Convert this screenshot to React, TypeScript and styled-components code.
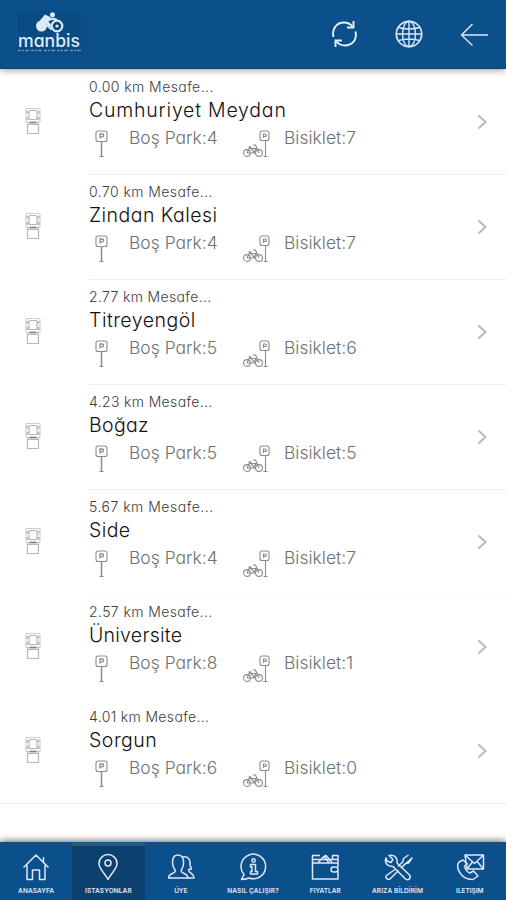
import React from "react";
import styled, { createGlobalStyle } from "styled-components";

const GlobalStyle = createGlobalStyle`
  * { box-sizing: border-box; }
  body { margin: 0; background: #fff; font-family: Inter, "Open Sans", sans-serif; font-feature-settings: "cv11" 1; }
`;

const Screen = styled.div`
  display: flex;
  flex-direction: column;
  width: 506px;
  height: 900px;
  overflow: hidden;
  background: #fff;
`;

const Header = styled.header`
  display: flex;
  align-items: center;
  flex: none;
  height: 69px;
  padding: 0 17px 0 16px;
  background: #0c508b;
  border-bottom: 1px solid #0a4579;
  box-shadow: 0 1px 7px rgba(0, 0, 0, 0.42);
  z-index: 1;
`;

const Brand = styled.div`
  flex: 1;
  height: 50px;
  margin-top: -3px;
`;

const Actions = styled.div`
  display: flex;
  align-items: center;
  gap: 35px;
  padding-bottom: 1px;
`;

const List = styled.main`
  flex: 1;
  min-height: 0;
  padding-top: 1px;
`;

const Row = styled.article<{ $last: boolean }>`
  display: grid;
  grid-template-columns: 89px 1fr;
  height: ${(p) => (p.$last ? 104 : 105)}px;
  border-bottom: ${(p) => (p.$last ? "1px solid #efefef" : "none")};
`;

const Thumb = styled.div`
  display: flex;
  align-items: center;
  padding: 0 0 4px 23px;
`;

const Body = styled.div<{ $line: string }>`
  display: grid;
  grid-template-columns: 1fr 50px;
  border-bottom: 1px solid ${(p) => p.$line};
`;

const Info = styled.div`
  padding-top: 7px;
`;

const Distance = styled.div<{ $track: number }>`
  height: 20px;
  font-size: 14px;
  line-height: 20px;
  font-weight: 300;
  letter-spacing: ${(p) => p.$track}px;
  color: #3d3d3d;
  white-space: nowrap;
`;

const Name = styled.div<{ $track: number }>`
  height: 27px;
  font-size: 19.5px;
  line-height: 27px;
  font-weight: 300;
  letter-spacing: ${(p) => p.$track}px;
  color: #111;
  white-space: nowrap;
`;

const Stats = styled.div`
  display: grid;
  grid-template-columns: 40px 114px 41px 1fr;
  height: 36px;
`;

const Stat = styled.span`
  font-size: 17.5px;
  line-height: 28px;
  font-weight: 300;
  color: #707070;
  white-space: nowrap;
`;

const More = styled.div`
  display: flex;
  align-items: center;
  padding: 0 0 1px 20px;
`;

const TabBar = styled.nav`
  display: grid;
  grid-template-columns: repeat(7, 1fr);
  flex: none;
  height: 58px;
  background: #0c508b;
  box-shadow: 0 -1px 7px rgba(0, 0, 0, 0.6);
`;

const Tab = styled.a<{ $active: boolean }>`
  display: flex;
  flex-direction: column;
  align-items: center;
  padding-top: ${(p) => (p.$active ? 6 : 10)}px;
  border-top: ${(p) => (p.$active ? "4px solid #1d5c88" : "none")};
  background: ${(p) => (p.$active ? "#0b406f" : "transparent")};
`;

const TabLabel = styled.span<{ $track: number }>`
  margin-top: 4.5px;
  font-size: 6.5px;
  line-height: 9px;
  font-weight: 600;
  letter-spacing: ${(p) => p.$track}px;
  color: #e3e9f8;
  white-space: nowrap;
`;

const LogoType = styled.text`
  font-family: Inter, sans-serif;
  font-size: 18px;
  font-weight: 500;
  font-feature-settings: "cv11" 1;
`;

const Logo = () => (
  <svg width="68" height="50" viewBox="0 0 68 50" fill="#dcecf8">
    <rect x="2" y="3" width="63" height="43" fill="#0a4a83" />
    <circle cx="25.500" cy="18" r="5.500" />
    <circle cx="36.500" cy="6.800" r="2.500" />
    <path d="M23.500 13 29 6.500l6 3-2.500 4 3 4-2 1.500-5-5-2 2z" />
    <path d="m31 17 4.500 4.500" stroke="#dcecf8" strokeWidth="2" />
    <circle cx="41" cy="18" r="5.300" fill="none" stroke="#dcecf8" strokeWidth="2.200" />
    <path d="m33 12 4-1.500 4 1.500" fill="none" stroke="#dcecf8" strokeWidth="2" />
    <circle cx="41" cy="18" r="1.600" />
    <LogoType x="2" y="39" textLength="62" lengthAdjust="spacingAndGlyphs">manbis</LogoType>
    <path d="M2 42.500h63" stroke="#6794bd" strokeWidth="1.500" strokeDasharray="3 1 2 1 4 2" />
  </svg>
);

const RefreshIcon = () => (
  <svg width="28" height="30" viewBox="0 0 28 30" fill="none" stroke="#e8f1fa" strokeWidth="1.9">
    <path d="M2.500 18C.5 9.500 6 3.500 13 3.500c4 0 6.500 1.500 8.500 4M24.500 12.500c2 8.500-3.500 14-10.500 14-4 0-6.500-1.500-8.500-4" />
    <path d="M22.500 2v6.500H16M4.500 28v-6.500H11" />
  </svg>
);

const GlobeIcon = () => (
  <svg width="30" height="30" viewBox="0 0 30 30" fill="none" stroke="#dce5f7" strokeWidth="1.4">
    <circle cx="15" cy="15" r="12.700" strokeWidth="1.700" />
    <ellipse cx="15" cy="15" rx="6.500" ry="12.700" />
    <path d="M15 2v26M2 15h26M4.500 8.500c7 2 14 2 21 0M4.500 21.500c7-2 14-2 21 0" />
  </svg>
);

const BackIcon = () => (
  <svg width="30" height="30" viewBox="0 0 30 30" fill="none" stroke="#dce8f6" strokeWidth="1.4">
    <path d="M29 16H3M13.500 5 2.500 16l11 10.500" />
  </svg>
);

const StationIcon = () => (
  <svg width="20" height="30" viewBox="0 0 20 30" fill="none" stroke="#b6b6b6" strokeWidth="1.200">
    <rect x="3" y="2.500" width="14" height="14" rx="1" stroke="#cfcfcf" />
    <rect x="6" y="4.500" width="8" height="9" rx="1" />
    <path d="M4.500 5v2.500M4.500 11v3M15.500 5v2.500M15.500 11v3" strokeWidth="1.800" />
    <path d="M6.500 16.500h7" stroke="#858585" strokeWidth="1.800" />
    <path d="M4.500 18.500h11v9h-11zM5 16v3M15 16v3" />
  </svg>
);

const ParkIcon = () => (
  <svg width="24" height="36" viewBox="0 0 24 36" fill="none" stroke="#8c8c8c" strokeWidth="1.100">
    <rect x="7" y="7" width="11" height="10.500" rx="2" />
    <path d="M11 14.500v-4.500h2.200a1.400 1.400 0 0 1 0 2.800H11" strokeWidth="1.300" />
    <path d="M12.500 17.500V32" strokeWidth="1.500" />
    <path d="M10.500 32.500h4" />
  </svg>
);

const BikeIcon = () => (
  <svg width="30" height="36" viewBox="0 0 30 36" fill="none" stroke="#8c8c8c" strokeWidth="1.100">
    <rect x="17" y="7" width="9" height="9.500" rx="2" />
    <path d="M20.500 14v-4h1.700a1.200 1.200 0 0 1 0 2.400h-1.700" />
    <path d="M22.500 16.500V32M20.500 32.500h4" />
    <circle cx="4" cy="29" r="3.400" />
    <circle cx="16" cy="29" r="3.400" />
    <path d="m4 29 3-6 4.500 6H4m3-4.500h6L11 29m5 0-3.500-8H10M5.500 23h3" strokeWidth="1.200" />
  </svg>
);

const Chevron = () => (
  <svg width="14" height="20" viewBox="0 0 14 20" fill="none" stroke="#b9b9b9" strokeWidth="2">
    <path d="M2.500 3.500 9.500 10l-7 6.500" />
  </svg>
);

const TabIcon = styled.svg`
  flex: none;
  width: 30px;
  height: 30px;
  fill: none;
  stroke: #dfe6fa;
  stroke-width: 1.5;
  stroke-linejoin: round;
`;

const tabs = [
  {
    label: "ANASAYFA", track: 0.1,
    icon: <path d="M2.500 15.500 15 3l12.500 12.500M6 13v14.500h5.500V18h7v9.500H24V13M22.500 10V5" />,
  },
  {
    label: "ISTASYONLAR", track: 0.1,
    icon: <><path d="M15 27.500C11.500 20.500 6 17 6 11.500a9 9 0 0 1 18 0c0 5.500-5.500 9-9 16z" /><circle cx="15" cy="11" r="3" /></>,
  },
  {
    label: "ÜYE", track: -0.1,
    icon: <><path d="M2.500 26c0-5 7-4 7-7.500C5 13 5.500 3 12 3s7 10 3 15.500c0 3.500 7 2.500 7 7.500z" /><path d="M16.500 5c7-2 8 5 7.500 8l1.500 4-3 .5c0 4 5.500 3.500 5.500 8.500h-6" /></>,
  },
  {
    label: "NASIL ÇALIŞIR?", track: 0.15,
    icon: <><path d="M3.500 27.500 6 22.500A12.300 12.300 0 1 1 11 26c-2.500 1-5 1.500-7.500 1.500z" /><circle cx="15.500" cy="8.500" r="1.700" /><path d="M12.500 12.500h5v7h2v2.500h-7v-2.500H14V15h-1.500z" /></>,
  },
  {
    label: "FIYATLAR", track: 0,
    icon: <><path d="M28 15V7.500H2.500V27H28v-8M2.500 11H28M2.500 7.500V3.500H10M22.500 7.500V3.500H28v4" /><path d="m8 10.500 6-6 5 6m-7-4.500 4-2.500 6 7" /><rect x="21" y="15" width="7" height="5" rx="2.500" /></>,
  },
  {
    label: "ARIZA BİLDİRİM", track: 0.1,
    icon: <><path d="m10 14.500 12.500 12.500c3 2 6-1 4-4L14 11c1-5-3-9-8-7.500l4 4-2 3-4-1.500-1-3C1 11 5 15 10 14.500z" /><path d="m25.500 3-5 3.500-.5 3-5 5m-3 3L4 23c-2.500 3 1 6 3.500 3.500l8-8m3-3 4-4 3-.5L29 6z" /></>,
  },
  {
    label: "ILETIŞIM", track: 0,
    icon: <><path d="M10 3h18.500v14H12z M10 3l9.500 8.500 9-8.500M12 17l5.500-7m5 0 6 7" /><path d="m8 8-4 2c-4 4 1 18 14 17.500l5-3.500-4.500-5-3.500 2c-3-1-5-4-5.500-7l3-2z" /></>,
  },
];

const stations = [
  { km: "0.00", kmTrack: 0.43, name: "Cumhuriyet Meydan", track: 0.78, park: 4, bikes: 7 },
  { km: "0.70", kmTrack: 0.43, name: "Zindan Kalesi", track: 0.46, park: 4, bikes: 7 },
  { km: "2.77", kmTrack: 0.35, name: "Titreyengöl", track: 0.48, park: 5, bikes: 6 },
  { km: "4.23", kmTrack: 0.35, name: "Boğaz", track: 0.35, park: 5, bikes: 5 },
  { km: "5.67", kmTrack: 0.5, name: "Side", track: 0.4, park: 4, bikes: 7 },
  { km: "2.57", kmTrack: 0.4, name: "Üniversite", track: 0.25, park: 8, bikes: 1 },
  { km: "4.01", kmTrack: 0.35, name: "Sorgun", track: 0.5, park: 6, bikes: 0 },
];

export default function App() {
  return (
    <>
      <GlobalStyle />
      <Screen>
        <Header>
          <Brand><Logo /></Brand>
          <Actions><RefreshIcon /><GlobeIcon /><BackIcon /></Actions>
        </Header>
        <List>
          {stations.map((s, i) => {
            const last = i === stations.length - 1;
            return (
              <Row key={s.name} $last={last}>
                <Thumb><StationIcon /></Thumb>
                <Body $line={i < 4 ? "#efefef" : i === 4 ? "#fafafa" : "transparent"}>
                  <Info>
                    <Distance $track={s.kmTrack}>{s.km} km Mesafe...</Distance>
                    <Name $track={s.track}>{s.name}</Name>
                    <Stats>
                      <ParkIcon />
                      <Stat>Boş Park:{s.park}</Stat>
                      <BikeIcon />
                      <Stat>Bisiklet:{s.bikes}</Stat>
                    </Stats>
                  </Info>
                  <More><Chevron /></More>
                </Body>
              </Row>
            );
          })}
        </List>
        <TabBar>
          {tabs.map((t, i) => (
            <Tab key={t.label} $active={i === 1}>
              <TabIcon viewBox="0 0 30 30">{t.icon}</TabIcon>
              <TabLabel $track={t.track}>{t.label}</TabLabel>
            </Tab>
          ))}
        </TabBar>
      </Screen>
    </>
  );
}
